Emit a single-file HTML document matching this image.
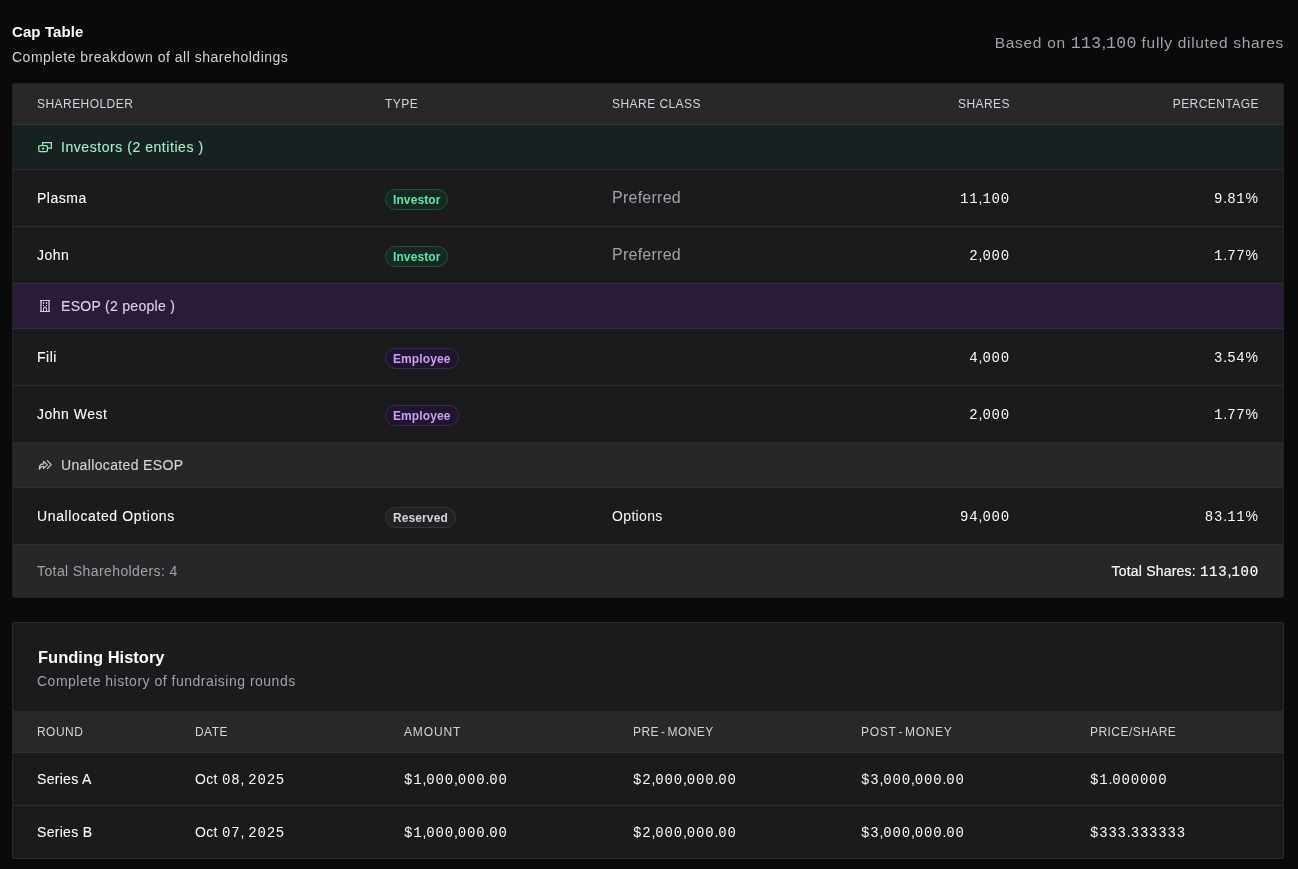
<!DOCTYPE html>
<html><head><meta charset="utf-8">
<style>
*{box-sizing:border-box;margin:0;padding:0}
html,body{width:1298px;height:869px;overflow:hidden;background:#0a0a0c;font-family:"Liberation Sans",sans-serif;color:#f4f4f5}
#w{position:absolute;left:0;top:0;width:1298px;height:869px;will-change:transform}
.abs{position:absolute;white-space:nowrap;line-height:1}
.n{font-family:"Liberation Mono",monospace;letter-spacing:0.8px}
.n i{font-style:normal;font-family:"Liberation Sans",sans-serif;letter-spacing:0}
.card{position:absolute;left:12px;width:1272px;border:1px solid #222225;border-radius:2px;background:#1b1b1e;overflow:hidden}
.row{position:absolute;left:0;right:0}
.hdr{background:#28282b;color:#d4d4d8;font-size:12px;letter-spacing:0.45px}
.bt{border-top:1px solid #2e2e32}
.t{position:absolute;white-space:nowrap;line-height:1}
.badge{position:absolute;height:21px;border-radius:11px;border:1px solid;font-size:12px;font-weight:bold;line-height:20px;padding:0 7px 0 7px;letter-spacing:0.1px;white-space:nowrap}
.inv{background:#16291f;border-color:#1f5240;color:#62e4a9}
.emp{background:#21142d;border-color:#3d2a58;color:#c7a0f7}
.res{background:#222225;border-color:#38383c;color:#d4d4d8}
.name{font-size:14px;letter-spacing:0.5px;color:#fafafa;-webkit-text-stroke:0.1px #fafafa}
.num{font-size:14px;color:#fafafa}
</style></head><body><div id="w">

<div class="abs" style="left:12px;top:24px;font-size:15px;font-weight:bold;color:#fafafa;letter-spacing:0.1px">Cap Table</div>
<div class="abs" style="left:12px;top:50px;font-size:14px;letter-spacing:0.5px;color:#d4d4d8">Complete breakdown of all shareholdings</div>
<div class="abs" style="right:14px;top:34px;font-size:15.5px;letter-spacing:0.7px;color:#a1a1aa">Based on <span class="n" style="font-size:16.5px;letter-spacing:0.3px">113<i>,</i>100</span> fully diluted shares</div>
<div class="card" style="top:83px;height:515px">
<div class="row hdr" style="top:0;height:40px">
<div class="t" style="left:24px;top:14px">SHAREHOLDER</div>
<div class="t" style="left:372px;top:14px">TYPE</div>
<div class="t" style="left:599px;top:14px">SHARE CLASS</div>
<div class="t" style="right:273px;top:14px">SHARES</div>
<div class="t" style="right:24px;top:14px">PERCENTAGE</div>
</div>
<div class="row bt" style="top:40px;height:45px;background:#182121;border-color:#2c3a36">
<svg class="t" style="left:24px;top:16px" width="16" height="12" viewBox="0 0 16 12" fill="none" stroke="#9be8c4" stroke-width="1.25"><path d="M5.6 4V1.6h8.8v5.6H11"/><rect x="1.8" y="4.6" width="8.6" height="6" rx="1"/><circle cx="6" cy="7.6" r="0.8" fill="#9be8c4" stroke-width="0.8"/></svg><div class="t" style="left:48px;top:15px;color:#a3ebc9;font-size:14px;letter-spacing:0.55px;-webkit-text-stroke:0.12px #a3ebc9">Investors (2 entities )</div></div>
<div class="row bt" style="top:85px;height:57px"><div class="t name" style="left:24px;top:21px">Plasma</div><div class="badge inv" style="left:372px;top:19px">Investor</div><div class="t" style="left:599px;top:20px;font-size:16px;letter-spacing:0.25px;color:#a1a1aa">Preferred</div><div class="t num" style="right:273px;top:21px"><span class="n">11<i>,</i>100</span></div><div class="t num" style="right:25px;top:21px"><span class="n">9<i>.</i>81<i>%</i></span></div></div>
<div class="row bt" style="top:142px;height:57px"><div class="t name" style="left:24px;top:21px">John</div><div class="badge inv" style="left:372px;top:19px">Investor</div><div class="t" style="left:599px;top:20px;font-size:16px;letter-spacing:0.25px;color:#a1a1aa">Preferred</div><div class="t num" style="right:273px;top:21px"><span class="n">2<i>,</i>000</span></div><div class="t num" style="right:25px;top:21px"><span class="n">1<i>.</i>77<i>%</i></span></div></div>
<div class="row bt" style="top:199px;height:45px;background:#2a1b36;border-color:#3a2f44">
<svg class="t" style="left:27px;top:16px" width="10" height="12" viewBox="0 0 10 12"><rect x="0" y="0" width="10" height="12" fill="#9c89b8"/><rect x="0" y="0" width="10" height="1.1" fill="#dcc6f4"/><rect x="0" y="10.9" width="10" height="1.1" fill="#dcc6f4"/><rect x="2" y="1.1" width="6" height="9.8" fill="#1f1429"/><rect x="2.8" y="2" width="1.4" height="2" rx="0.6" fill="#dcc6f4"/><rect x="5.8" y="2" width="1.4" height="2" rx="0.6" fill="#dcc6f4"/><rect x="2.8" y="4.8" width="1.4" height="1.3" rx="0.6" fill="#dcc6f4"/><rect x="5.8" y="4.8" width="1.4" height="1.3" rx="0.6" fill="#dcc6f4"/><path d="M3.5 11V8.6a1.5 1.5 0 0 1 3 0V11" fill="none" stroke="#d0bce8" stroke-width="1.1"/></svg><div class="t" style="left:48px;top:15px;color:#e0cbf6;font-size:14px;letter-spacing:0.3px;-webkit-text-stroke:0.12px #e0cbf6">ESOP (2 people )</div></div>
<div class="row bt" style="top:244px;height:57px"><div class="t name" style="left:24px;top:21px">Fili</div><div class="badge emp" style="left:372px;top:19px">Employee</div><div class="t num" style="right:273px;top:21px"><span class="n">4<i>,</i>000</span></div><div class="t num" style="right:25px;top:21px"><span class="n">3<i>.</i>54<i>%</i></span></div></div>
<div class="row bt" style="top:301px;height:57px"><div class="t name" style="left:24px;top:21px">John West</div><div class="badge emp" style="left:372px;top:19px">Employee</div><div class="t num" style="right:273px;top:21px"><span class="n">2<i>,</i>000</span></div><div class="t num" style="right:25px;top:21px"><span class="n">1<i>.</i>77<i>%</i></span></div></div>
<div class="row bt" style="top:358px;height:45px;background:#27272a;border-color:#2e2e32">
<svg class="t" style="left:24px;top:16px" width="16" height="12" viewBox="0 0 16 12" fill="none" stroke="#d4d4d8" stroke-width="1.1" stroke-linejoin="round" stroke-linecap="round"><path d="M2.2 10.2C2.2 7 3.8 4.9 6.6 4.9V2.4L10.4 5.8L6.6 9.3V7.3C4.8 7.3 3.3 8.4 2.2 10.2Z"/><path d="M10.3 1.6L14.2 5.6L10.3 9.6"/></svg><div class="t" style="left:48px;top:15px;color:#d4d4d8;font-size:14px;letter-spacing:0.35px;-webkit-text-stroke:0.12px #d4d4d8">Unallocated ESOP</div></div>
<div class="row bt" style="top:403px;height:57px"><div class="t name" style="left:24px;top:21px"><span style="letter-spacing:0.62px">Unallocated Options</span></div><div class="badge res" style="left:372px;top:19px">Reserved</div><div class="t" style="left:599px;top:21px;font-size:14px;letter-spacing:0.35px;color:#fafafa">Options</div><div class="t num" style="right:273px;top:21px"><span class="n">94<i>,</i>000</span></div><div class="t num" style="right:25px;top:21px"><span class="n">83<i>.</i>11<i>%</i></span></div></div>
<div class="row bt" style="top:460px;height:54px;background:#27272a">
<div class="t" style="left:24px;top:19px;font-size:14px;letter-spacing:0.4px;color:#a1a1aa">Total Shareholders: 4</div>
<div class="t" style="right:24px;top:19px;font-size:14px;letter-spacing:0.2px;color:#fafafa;-webkit-text-stroke:0.2px #fafafa">Total Shares: <span class="n">113<i>,</i>100</span></div>
</div>
</div>
<div class="card" style="top:622px;height:237px;border-color:#2a2a2d">
<div class="t" style="left:25px;top:26px;font-size:16.5px;font-weight:bold;color:#fafafa">Funding History</div>
<div class="t" style="left:24px;top:51px;font-size:14px;letter-spacing:0.5px;color:#a1a1aa">Complete history of fundraising rounds</div>
<div class="row hdr" style="top:88px;height:41px"><div class="t" style="left:24px;top:15px">ROUND</div><div class="t" style="left:182px;top:15px">DATE</div><div class="t" style="left:391px;top:15px"><span style="letter-spacing:0.85px">AMOUNT</span></div><div class="t" style="left:620px;top:15px">PRE<span style="margin:0 2px">-</span>MONEY</div><div class="t" style="left:848px;top:15px"><span style="letter-spacing:0.7px">POST</span><span style="margin:0 2px">-</span><span style="letter-spacing:0.7px">MONEY</span></div><div class="t" style="left:1077px;top:15px">PRICE/SHARE</div></div>
<div class="row bt" style="top:129px;height:53px"><div class="t name" style="left:24px;top:19px;letter-spacing:0.3px">Series A</div><div class="t" style="left:182px;top:19px;font-size:14px;letter-spacing:0.35px;color:#fafafa">Oct <span class="n">08<i>,</i><i> </i>2025</span></div><div class="t num" style="left:391px;top:19px"><span class="n">$1<i>,</i>000<i>,</i>000<i>.</i>00</span></div><div class="t num" style="left:620px;top:19px"><span class="n">$2<i>,</i>000<i>,</i>000<i>.</i>00</span></div><div class="t num" style="left:848px;top:19px"><span class="n">$3<i>,</i>000<i>,</i>000<i>.</i>00</span></div><div class="t num" style="left:1077px;top:19px"><span class="n">$1<i>.</i>000000</span></div></div>
<div class="row bt" style="top:182px;height:54px"><div class="t name" style="left:24px;top:19px;letter-spacing:0.3px">Series B</div><div class="t" style="left:182px;top:19px;font-size:14px;letter-spacing:0.35px;color:#fafafa">Oct <span class="n">07<i>,</i><i> </i>2025</span></div><div class="t num" style="left:391px;top:19px"><span class="n">$1<i>,</i>000<i>,</i>000<i>.</i>00</span></div><div class="t num" style="left:620px;top:19px"><span class="n">$2<i>,</i>000<i>,</i>000<i>.</i>00</span></div><div class="t num" style="left:848px;top:19px"><span class="n">$3<i>,</i>000<i>,</i>000<i>.</i>00</span></div><div class="t num" style="left:1077px;top:19px"><span class="n">$333<i>.</i>333333</span></div></div>
</div>
</div></body></html>
